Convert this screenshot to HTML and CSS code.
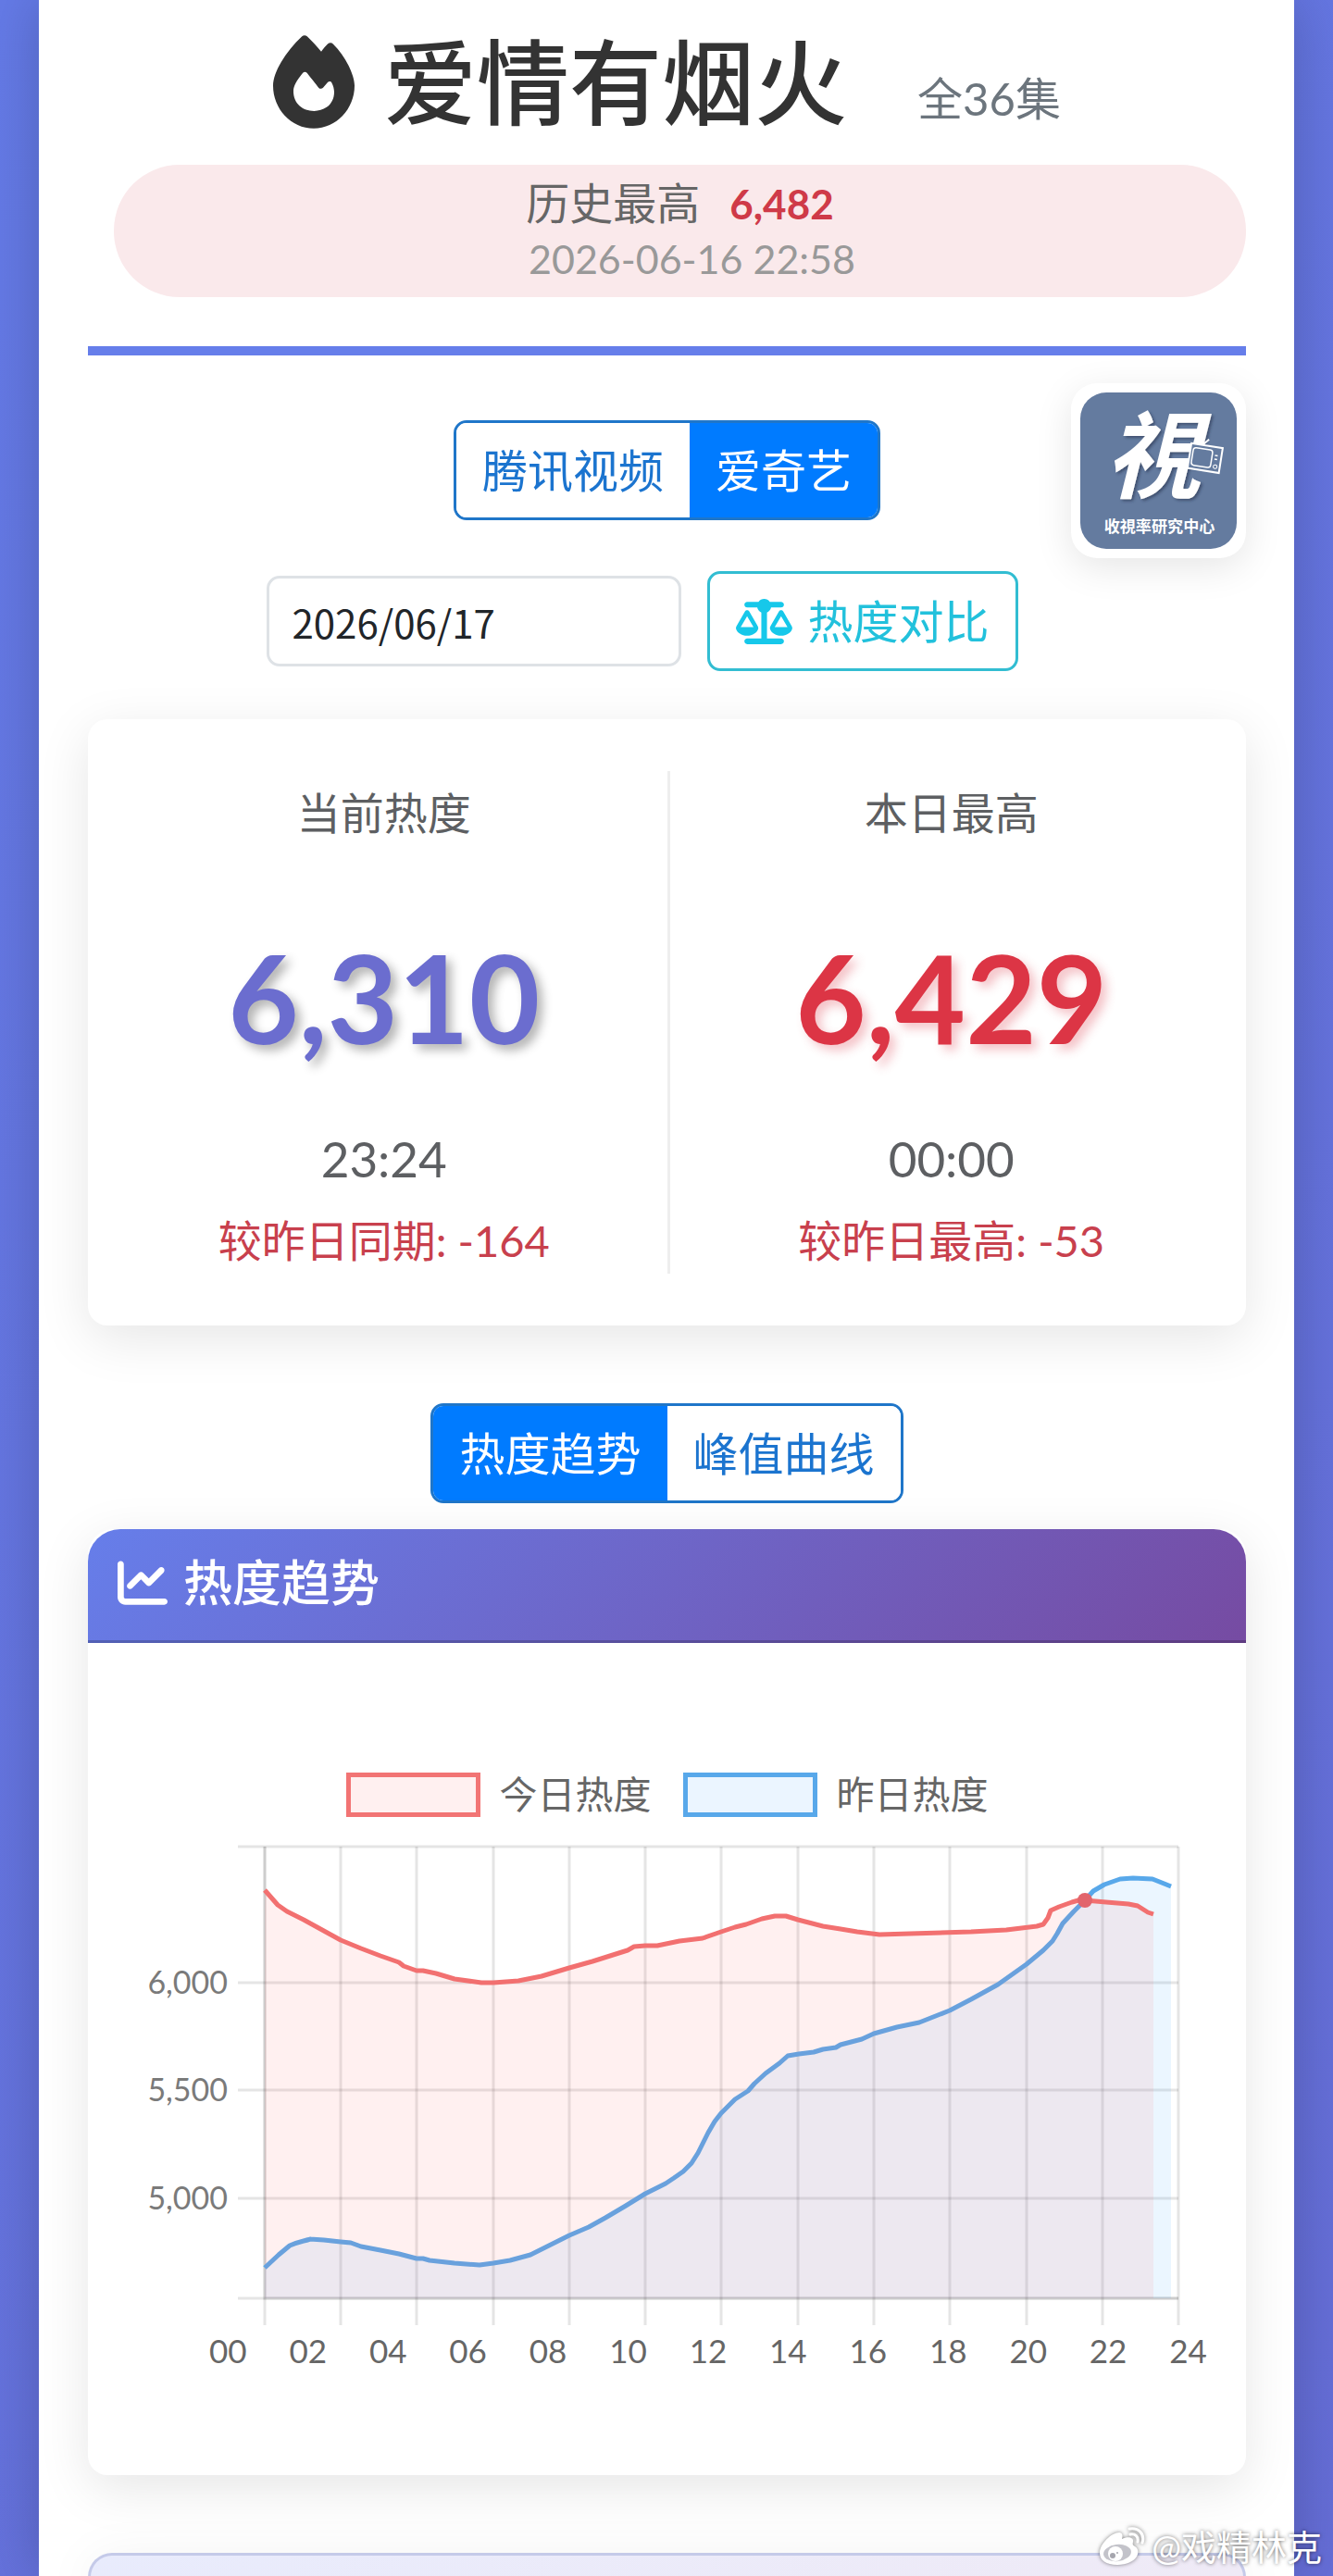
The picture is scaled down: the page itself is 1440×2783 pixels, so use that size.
FILE: index.html
```html
<!DOCTYPE html>
<html lang="zh-CN">
  <head>
    <meta charset="utf-8">
    <meta name="viewport" content="width=device-width, initial-scale=1">
    <title>爱情有烟火</title>
    <link rel="stylesheet" href="styles.css">
  </head>
  <body>
    <main class="container">
      <header class="header">
        <div class="title-row">
          <h1 class="title">
            <svg class="icon-fire" viewBox="0 0 448 512" aria-hidden="true"><path d="M159.300 5.400c7.800-7.300 19.900-7.200 27.700 .1c27.600 25.900 53.500 53.800 77.700 84c11-14.400 23.500-30.100 37-42.900c7.900-7.400 20.100-7.400 28 .1c34.600 33 63.900 76.600 84.500 118c20.300 40.800 33.800 82.500 33.800 111.900C448 404.200 348.200 512 224 512C98.400 512 0 404.100 0 276.500c0-38.400 17.800-85.300 45.400-131.700C73.300 97.700 112.700 48.600 159.300 5.400zM225.700 416c25.300 0 47.700-7 68.800-21c42.100-29.400 53.400-88.200 28.100-134.400c-4.500-9-16-9.600-22.500-2l-25.200 29.300c-6.600 7.600-18.500 7.400-24.700-.5c-16.500-21-46-58.500-62.800-79.800c-6.300-8-18.300-8.100-24.700-.1c-33.800 42.500-50.800 69.300-50.800 99.400C112 375.400 162.600 416 225.700 416z"/></svg>
            爱情有烟火
          </h1>
          <span class="episodes">全36集</span>
        </div>
        <div class="record">
          <div class="record-line">历史最高<strong class="record-value">6,482</strong></div>
          <div class="record-time">2026-06-16 22:58</div>
        </div>
      </header>

      <div class="logo">
        <svg viewBox="0 0 168 168" role="img" aria-label="收視率研究中心">
          <defs>
            <filter id="ink" x="-20%" y="-20%" width="140%" height="140%">
              <feDropShadow dx="2" dy="2" stdDeviation="1.500" flood-color="#26364f" flood-opacity="0.600"/>
            </filter>
          </defs>
          <rect width="168" height="168" rx="28" fill="#647b9f"/>
          <g filter="url(#ink)">
            <text class="logo-mark" x="78" y="105" text-anchor="middle">視</text>
          </g>
          <g transform="rotate(9 134 71)" fill="#647b9f" stroke="#fff" stroke-width="2">
            <path d="M128 57l-5-7M129 57l6-7" fill="none"/>
            <rect x="117" y="57" width="34" height="27"/>
            <rect x="120" y="61" width="21" height="19" rx="3" stroke-width="1.500"/>
            <circle cx="146" cy="78" r="2" stroke-width="1"/>
            <path d="M144 66h3M144 70h3" stroke-width="1.500"/>
          </g>
          <text class="logo-name" x="85" y="150" text-anchor="middle">收視率研究中心</text>
        </svg>
      </div>

      <div class="btn-group platforms">
        <button type="button" class="btn">腾讯视频</button>
        <button type="button" class="btn active">爱奇艺</button>
      </div>

      <div class="toolbar">
        <input class="date" type="text" value="2026/06/17" aria-label="日期">
        <button type="button" class="compare">
          <svg class="icon-scale" viewBox="0 0 640 512" aria-hidden="true"><path d="M384 32H512c17.700 0 32 14.300 32 32s-14.300 32-32 32H398.400c-5.200 25.800-22.900 47.100-46.400 57.300V448H512c17.700 0 32 14.300 32 32s-14.300 32-32 32H320 128c-17.700 0-32-14.300-32-32s14.300-32 32-32H288V153.300c-23.500-10.300-41.200-31.600-46.400-57.300H128c-17.700 0-32-14.300-32-32s14.300-32 32-32H256c14.600-19.400 37.800-32 64-32s49.400 12.600 64 32zm55.600 288H584.400L512 195.800 439.600 320zM512 416c-62.900 0-115.200-34-126-78.900c-2.600-11 1-22.300 6.700-32.100l95.200-163.200c5-8.600 14.200-13.800 24.100-13.800s19.100 5.300 24.100 13.800l95.200 163.200c5.700 9.800 9.300 21.100 6.700 32.100C627.200 382 574.900 416 512 416zM126.800 195.800L54.400 320H199.300L126.800 195.800zM.9 337.100c-2.600-11 1-22.300 6.700-32.100l95.200-163.200c5-8.600 14.200-13.800 24.100-13.800s19.100 5.300 24.100 13.800l95.200 163.200c5.700 9.800 9.300 21.100 6.700 32.100C242 382 189.700 416 126.800 416S11.700 382 .9 337.100z"/></svg>
          热度对比
        </button>
      </div>

      <section class="stats">
        <div class="stat">
          <div class="stat-title">当前热度</div>
          <div class="stat-value">6,310</div>
          <div class="stat-time">23:24</div>
          <div class="stat-diff">较昨日同期: -164</div>
        </div>
        <div class="stat">
          <div class="stat-title">本日最高</div>
          <div class="stat-value peak">6,429</div>
          <div class="stat-time">00:00</div>
          <div class="stat-diff">较昨日最高: -53</div>
        </div>
      </section>

      <div class="btn-group views">
        <button type="button" class="btn active">热度趋势</button>
        <button type="button" class="btn">峰值曲线</button>
      </div>

      <section class="chart-card">
        <h2 class="chart-header">
          <svg class="icon-chart" viewBox="0 0 512 512" aria-hidden="true"><path d="M64 64c0-17.700-14.300-32-32-32S0 46.300 0 64V400c0 44.200 35.800 80 80 80H480c17.700 0 32-14.300 32-32s-14.300-32-32-32H80c-8.800 0-16-7.200-16-16V64zm406.600 86.600c12.500-12.500 12.500-32.800 0-45.300s-32.800-12.500-45.300 0L320 210.700l-57.400-57.400c-12.500-12.500-32.800-12.500-45.300 0l-112 112c-12.500 12.500-12.500 32.800 0 45.300s32.800 12.500 45.300 0L240 221.300l57.400 57.400c12.500 12.500 32.800 12.500 45.300 0l128-128z"/></svg>
          热度趋势
        </h2>
        <div class="legend">
          <span class="legend-item"><i class="swatch today"></i>今日热度</span>
          <span class="legend-item"><i class="swatch yesterday"></i>昨日热度</span>
        </div>
        <svg class="chart" viewBox="0 0 1251 556" role="img" aria-label="热度趋势">
          <g class="y-labels" text-anchor="end">
            <text x="151" y="191">6,000</text>
            <text x="151" y="307">5,500</text>
            <text x="151" y="424">5,000</text>
          </g>
          <g transform="translate(191 32)">
            <g class="grid">
              <path d="M-29 0H987M-29 147H987M-29 263H987M-29 380H987M-29 488H987"/>
              <path d="M0 0V517M82 0V517M164 0V517M247 0V517M329 0V517M411 0V517M493 0V517M576 0V517M658 0V517M740 0V517M823 0V517M905 0V517M987 0V517"/>
              <path d="M0 0V488H987"/>
            </g>
            <path class="area-yesterday" d="M0 488V455L15 441L27 431L42 426L49 424L64 425L82 427L93 428L104 432L125 436L145 440L164 445H171L178 447L205 450L232 452L247 450L265 447L287 441L305 432L329 420L350 411L368 401L390 388L411 375L433 364L442 358L452 351L461 342L468 331L473 321L479 309L486 297L493 288L508 273L522 264L529 256L541 245L556 234L565 226L577 224L593 222L603 219L617 217L622 214L645 208L658 202L683 195L707 190L740 177L763 165L792 149L823 127L841 112L851 102L856 94L862 83L874 70L886 58L895 48L907 41L924 35L938 34L959 35L979 43V488z"/>
            <path class="line-yesterday" d="M0 455L15 441L27 431Q34 428 42 426T49 424L64 425L82 427L93 428L104 432L125 436L145 440L164 445H171L178 447L205 450L232 452L247 450L265 447L287 441L305 432L329 420L350 411L368 401L390 388L411 375L433 364L442 358L452 351L461 342L468 331L473 321L479 309L486 297L493 288L508 273L522 264L529 256L541 245L556 234L565 226L577 224L593 222L603 219L617 217L622 214L645 208L658 202L683 195L707 190L740 177L763 165L792 149L823 127L841 112L851 102L856 94L862 83L874 70L886 58L895 48L907 41L924 35L938 34L959 35L979 43"/>
            <path class="area-today" d="M0 488V47L14 63L24 70L42 79L62 90L82 101L104 110L125 118L145 125L150 129L164 134H171L185 137L205 143L234 147H247L274 145L299 140L329 131L354 124L392 112L399 108L411 107H424L448 102L473 99L493 92L508 87L520 84L537 78L551 75H563L576 79L603 86L622 89L640 92L664 95L697 94L763 92L801 90L834 86L841 84L846 77L849 69L858 65L872 60L879 58H886L909 60L933 62L943 64L954 71L960 73V488z"/>
            <path class="line-today" d="M0 47L14 63L24 70L42 79L62 90L82 101L104 110L125 118L145 125L150 129L164 134H171L185 137L205 143L234 147H247L274 145L299 140L329 131L354 124L392 112L399 108L411 107H424L448 102L473 99L493 92L508 87L520 84L537 78L551 75H563L576 79L603 86L622 89L640 92L664 95L697 94L763 92L801 90L834 86L841 84L846 77L849 69L858 65L872 60L879 58H886L909 60L933 62L943 64L954 71L960 73"/>
            <circle class="peak-dot" cx="886" cy="58" r="8"/>
          </g>
        </svg>
        <div class="hours">
          <span>00</span><span>02</span><span>04</span><span>06</span><span>08</span><span>10</span><span>12</span><span>14</span><span>16</span><span>18</span><span>20</span><span>22</span><span>24</span>
        </div>
      </section>

      <section class="next-card"></section>
    </main>

    <div class="watermark">
      <svg class="icon-weibo" viewBox="0 0 50 42" aria-hidden="true">
        <path d="M1 28C1 18 14 6 22 6C26 6 26 10 25 13C31 10 38 11 37 16C36 19 37 20 39 21C47 26 41 41 20 41C8 41 1 36 1 28z"/>
        <ellipse cx="20" cy="28" rx="15" ry="9" fill="#c3c3ca" transform="rotate(-7 20 28)"/>
        <circle cx="18" cy="29" r="8"/>
        <circle cx="15" cy="31" r="3" fill="#a6a6ae"/>
        <circle cx="20" cy="28" r="1" fill="#a6a6ae"/>
        <path d="M33 2c10-2 17 6 14 15M34 8c5-1 9 2 8 8" fill="none" stroke="#fff" stroke-width="3" stroke-linecap="round"/>
      </svg>
      @戏精林克
    </div>
  </body>
</html>
```

FILE: styles.css
```css
* {
  box-sizing: border-box;
}
body {
  margin: 0;
  min-height: 100vh;
  display: flex;
  padding: 0 42px;
  position: relative;
  overflow-x: hidden;
  font-family: Lato, "Noto Sans CJK SC", sans-serif;
  color: #333;
  background: linear-gradient(135deg, #647ae6, #656dd6);
}
button,
input {
  font: inherit;
}
.container {
  position: relative;
  flex: 1;
  display: flex;
  flex-direction: column;
  padding: 28px 52px 0 53px;
  background: #fff;
  box-shadow: 0 0 56px rgba(0, 0, 0, 0.2);
}

/* header */
.header {
  padding-bottom: 53px;
  border-bottom: 10px solid #667eea;
}
.title-row {
  display: flex;
  justify-content: center;
  align-items: flex-end;
  gap: 76px;
  margin-bottom: 30px;
}
.title {
  display: flex;
  align-items: center;
  gap: 32px;
  margin: 0;
  font-size: 100px;
  font-weight: 500;
  line-height: 120px;
}
.icon-fire {
  width: 88px;
  height: 101px;
  fill: #333;
}
.episodes {
  font-size: 49px;
  line-height: 84px;
  color: #6c757d;
}
.record {
  margin-left: 28px;
  padding: 11px 0;
  text-align: center;
  line-height: 60px;
  background: #fae9eb;
  border-radius: 71px;
}
.record-line {
  font-size: 47px;
  color: #666;
}
.record-value {
  margin-left: 32px;
  font-size: 44px;
  color: #cf3a48;
}
.record-time {
  padding-left: 26px;
  font-size: 43px;
  color: #999;
}

/* corner logo */
.logo {
  position: absolute;
  top: 414px;
  right: 52px;
  width: 189px;
  padding: 10px;
  background: #fff;
  border-radius: 28px;
  box-shadow: 0 10px 40px rgba(0, 0, 0, 0.1);
}
.logo svg {
  display: block;
  overflow: visible;
}
.logo text {
  fill: #fff;
  font-family: "Noto Sans CJK TC", sans-serif;
}
.logo-mark {
  font-size: 102px;
  font-style: italic;
  font-weight: 700;
}
.logo-name {
  font-size: 17px;
  font-weight: 700;
}

/* buttons */
.btn-group {
  display: flex;
  align-self: center;
  overflow: hidden;
  border: 3px solid #1f76c9;
  border-radius: 14px;
}
.btn {
  padding: 14px 28px;
  border: 0;
  font-size: 49px;
  line-height: 74px;
  color: #1b74cf;
  background: #fff;
}
.btn.active {
  color: #fff;
  background: #007bff;
}
.platforms {
  margin-top: 70px;
}
.views {
  margin-top: 84px;
}
.toolbar {
  display: flex;
  justify-content: center;
  align-items: center;
  gap: 28px;
  margin-top: 55px;
  padding-right: 53px;
}
.date {
  width: 448px;
  height: 98px;
  padding: 0 24px;
  border: 3px solid #dee2e6;
  border-radius: 14px;
  font-family: "Noto Sans CJK SC", sans-serif;
  font-size: 42px;
  color: #212529;
  background: #fff;
}
.compare {
  display: flex;
  align-items: center;
  gap: 16px;
  padding: 14px 28px;
  border: 3px solid #32bdd2;
  border-radius: 14px;
  font-size: 49px;
  line-height: 74px;
  color: #22c1dc;
  background: #fff;
}
.icon-scale {
  width: 61px;
  height: 49px;
  fill: #16c8ea;
}

/* stats */
.stats {
  display: grid;
  grid-template-columns: 1fr 1fr;
  margin-top: 52px;
  padding: 56px 0;
  border-radius: 21px;
  background: #fff;
  box-shadow: 0 14px 56px rgba(0, 0, 0, 0.1);
}
.stat {
  padding: 10px 0 0 14px;
  text-align: center;
}
.stat + .stat {
  padding: 10px 14px 0 0;
  border-left: 3px solid #eee;
}
.stat-title {
  font-size: 47px;
  line-height: 70px;
  color: #5d5f62;
}
.stat-value {
  margin: 84px 0 55px;
  font-size: 132px;
  font-weight: 700;
  line-height: 160px;
  color: #6b6dcf;
  text-shadow: 6px 6px 11px rgba(0, 0, 0, 0.3);
}
.stat-value.peak {
  color: #dc3545;
  text-shadow: 6px 6px 11px rgba(220, 53, 69, 0.3);
}
.stat-time {
  margin-bottom: 12px;
  font-size: 53px;
  line-height: 80px;
  color: #5d5f62;
}
.stat-diff {
  font-size: 47px;
  line-height: 72px;
  color: #c8404d;
}

/* chart */
.chart-card {
  margin-top: 28px;
  padding-bottom: 115px;
  border-radius: 28px 28px 21px 21px;
  background: #fff;
  box-shadow: 0 14px 56px rgba(0, 0, 0, 0.1);
}
.chart-header {
  display: flex;
  align-items: center;
  gap: 17px;
  margin: 0;
  padding: 18px 32px 22px;
  border-bottom: 3px solid rgba(0, 0, 0, 0.2);
  border-radius: 35px 35px 0 0;
  font-size: 53px;
  font-weight: 500;
  line-height: 80px;
  color: #fff;
  background: linear-gradient(135deg, #667eea, #764ba2) border-box;
}
.icon-chart {
  width: 54px;
  height: 54px;
  fill: #fff;
}
.legend {
  display: flex;
  justify-content: center;
  gap: 34px;
  padding-top: 140px;
  font-size: 41px;
  line-height: 48px;
  color: #666;
}
.legend-item {
  display: flex;
  gap: 21px;
}
.swatch {
  width: 145px;
  height: 48px;
  border: 5px solid;
}
.swatch.today {
  border-color: #f27474;
  background: #fff0f0;
}
.swatch.yesterday {
  border-color: #58a8ea;
  background: #ebf5ff;
}
.chart {
  display: block;
  width: 100%;
}
.y-labels {
  font-size: 34px;
  fill: #7a7a7a;
}
.grid {
  fill: none;
  stroke: rgba(0, 0, 0, 0.1);
  stroke-width: 3;
}
.line-today,
.line-yesterday {
  fill: none;
  stroke-width: 5;
  stroke-linejoin: round;
}
.line-today {
  stroke: #f27070;
}
.line-yesterday {
  stroke: #58a8ea;
}
.area-today {
  fill: rgba(255, 107, 107, 0.1);
}
.area-yesterday {
  fill: rgba(54, 162, 255, 0.1);
}
.peak-dot {
  fill: #e2656c;
}
.hours {
  display: flex;
  justify-content: space-between;
  padding: 0 42px 0 131px;
  font-size: 35px;
  line-height: 40px;
  color: #666;
}

.next-card {
  flex: 1;
  min-height: 26px;
  margin-top: 84px;
  border: 3px solid #c5cae9;
  border-bottom: 0;
  border-radius: 42px 42px 0 0;
  background: linear-gradient(135deg, #e8ebfc, #efeaf6);
  box-shadow: 0 14px 56px rgba(0, 0, 0, 0.1);
}

/* signature in the corner */
.watermark {
  position: absolute;
  right: 12px;
  bottom: 8px;
  display: flex;
  align-items: center;
  gap: 7px;
  font-size: 38px;
  line-height: 50px;
  color: #fff;
  text-shadow: 0 0 4px rgba(0, 0, 0, 0.6);
}
.icon-weibo {
  width: 50px;
  height: 42px;
  fill: #fff;
  filter: drop-shadow(0 0 2px rgba(0, 0, 0, 0.5));
}
```
